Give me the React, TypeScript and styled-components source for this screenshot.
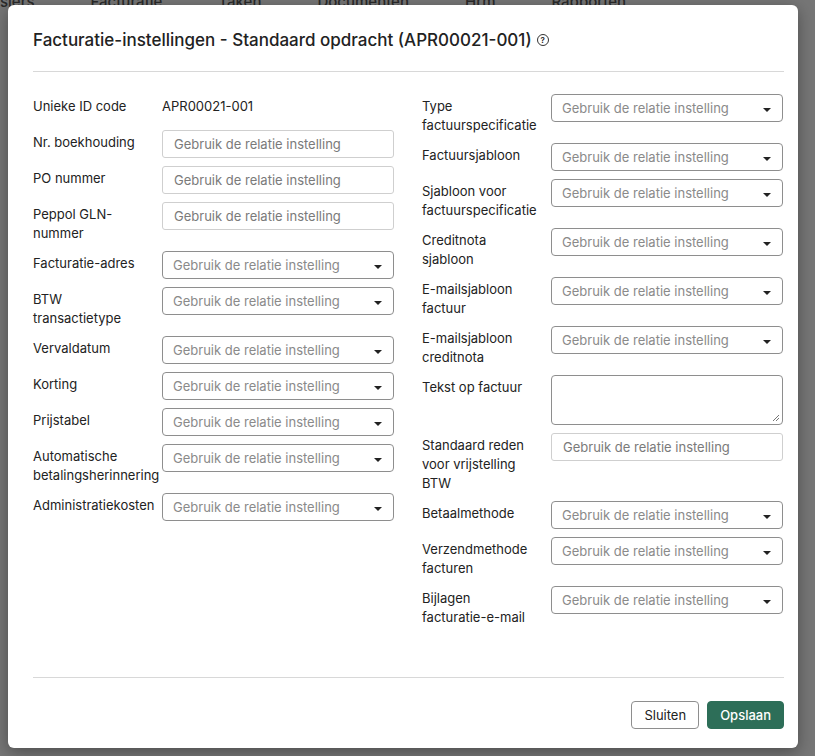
import React from 'react';
import styled, { createGlobalStyle } from 'styled-components';

const Global = createGlobalStyle`
  html, body { margin: 0; padding: 0; }
  body { background: #767676; font-family: Inter, "Noto Sans", sans-serif; color: #222; }
`;

const Page = styled.div`
  position: relative;
  width: 815px;
  height: 756px;
  overflow: hidden;
`;

const BackNav = styled.div`
  display: flex;
  gap: 56px;
  margin-top: -8px;
  font-size: 15px;
  color: #2a2a2a;
  font-weight: 500;
`;

const Modal = styled.div`
  position: absolute;
  left: 8px;
  top: 5px;
  width: 790px;
  height: 743px;
  background: #fff;
  border-radius: 6px;
  box-shadow: 0 4px 16px rgba(0, 0, 0, 0.35);
  box-sizing: border-box;
  padding: 0 14px 0 25px;
  display: flex;
  flex-direction: column;
`;

const Title = styled.h2`
  margin: 0;
  padding: 25px 0 21px;
  font-size: 17px;
  font-weight: 500;
  color: #222;
  display: flex;
  align-items: center;
  gap: 5px;
  border-bottom: 1px solid #d8d8d8;
`;

const Help = styled.span`
  width: 10px;
  height: 10px;
  border: 1.2px solid #333;
  border-radius: 50%;
  font-size: 8px;
  display: inline-flex;
  align-items: center;
  justify-content: center;
  font-weight: 600;
`;

const Grid = styled.div`
  display: grid;
  grid-template-columns: 361px 361px;
  column-gap: 28px;
  padding-top: 22px;
  flex: 1;
`;

const Column = styled.div`
  display: flex;
  flex-direction: column;
  gap: 8px;
`;

const Row = styled.div`
  display: grid;
  grid-template-columns: 129px 232px;
  align-items: start;
  min-height: 28px;
`;

const Label = styled.div`
  font-size: 13px;
  line-height: 19px;
  padding-top: 3px;
  color: #222;
  padding-right: 14px;
`;

const Value = styled.div`
  font-size: 13px;
  line-height: 19px;
  padding-top: 3px;
`;

const TextInput = styled.div`
  height: 28px;
  box-sizing: border-box;
  border: 1px solid #cfcfcf;
  border-radius: 3px;
  padding: 0 11px;
  display: flex;
  align-items: center;
  font-size: 13px;
  color: #7a7a7a;
`;

const Select = styled(TextInput)`
  border-color: #8e8e8e;
  border-radius: 4px;
  justify-content: space-between;
  padding: 0 11px 0 10px;
  color: #8a8a8a;
`;

const Caret = styled.span`
  width: 0;
  height: 0;
  border-left: 4px solid transparent;
  border-right: 4px solid transparent;
  border-top: 4px solid #222;
  margin-top: 3px;
`;

const TextArea = styled.div`
  position: relative;
  height: 50px;
  box-sizing: border-box;
  border: 1px solid #8e8e8e;
  border-radius: 4px;
`;

const Grip = styled.svg`
  position: absolute;
  right: 2px;
  bottom: 2px;
`;

const Footer = styled.div`
  border-top: 1px solid #d8d8d8;
  padding: 23px 0 19px;
  display: flex;
  justify-content: flex-end;
  gap: 8px;
`;

const Button = styled.button<{ primary?: boolean }>`
  height: 28px;
  padding: 0 12px;
  font-family: Inter, sans-serif;
  font-size: 13px;
  border-radius: 4px;
  border: 1px solid ${({ primary }) => (primary ? '#2d6e58' : '#8e8e8e')};
  background: ${({ primary }) => (primary ? '#2d6e58' : '#fff')};
  color: ${({ primary }) => (primary ? '#fff' : '#222')};
  font-weight: ${({ primary }) => (primary ? 500 : 400)};
`;

type Field = { label: string; kind: 'value' | 'input' | 'select' | 'area'; value?: string };

const PH = 'Gebruik de relatie instelling';

const left: Field[] = [
  { label: 'Unieke ID code', kind: 'value', value: 'APR00021-001' },
  { label: 'Nr. boekhouding', kind: 'input' },
  { label: 'PO nummer', kind: 'input' },
  { label: 'Peppol GLN-nummer', kind: 'input' },
  { label: 'Facturatie-adres', kind: 'select' },
  { label: 'BTW transactietype', kind: 'select' },
  { label: 'Vervaldatum', kind: 'select' },
  { label: 'Korting', kind: 'select' },
  { label: 'Prijstabel', kind: 'select' },
  { label: 'Automatische betalingsherinnering', kind: 'select' },
  { label: 'Administratiekosten', kind: 'select' },
];

const right: Field[] = [
  { label: 'Type factuurspecificatie', kind: 'select' },
  { label: 'Factuursjabloon', kind: 'select' },
  { label: 'Sjabloon voor factuurspecificatie', kind: 'select' },
  { label: 'Creditnota sjabloon', kind: 'select' },
  { label: 'E-mailsjabloon factuur', kind: 'select' },
  { label: 'E-mailsjabloon creditnota', kind: 'select' },
  { label: 'Tekst op factuur', kind: 'area' },
  { label: 'Standaard reden voor vrijstelling BTW', kind: 'input' },
  { label: 'Betaalmethode', kind: 'select' },
  { label: 'Verzendmethode facturen', kind: 'select' },
  { label: 'Bijlagen facturatie-e-mail', kind: 'select' },
];

const Control: React.FC<{ f: Field }> = ({ f }) => {
  if (f.kind === 'value') return <Value>{f.value}</Value>;
  if (f.kind === 'input') return <TextInput>{PH}</TextInput>;
  if (f.kind === 'area')
    return (
      <TextArea>
        <Grip width="8" height="8" viewBox="0 0 8 8">
          <path d="M7 1L1 7M7 4L4 7" stroke="#777" strokeWidth="1" />
        </Grip>
      </TextArea>
    );
  return (
    <Select>
      {PH}
      <Caret />
    </Select>
  );
};

const FieldColumn: React.FC<{ fields: Field[] }> = ({ fields }) => (
  <Column>
    {fields.map((f) => (
      <Row key={f.label}>
        <Label>{f.label}</Label>
        <Control f={f} />
      </Row>
    ))}
  </Column>
);

export default function App() {
  return (
    <Page>
      <Global />
      <BackNav>
        <span>siers</span>
        <span>Facturatie</span>
        <span>Taken</span>
        <span>Documenten</span>
        <span>Hrm</span>
        <span>Rapporten</span>
      </BackNav>
      <Modal>
        <Title>
          Facturatie-instellingen - Standaard opdracht (APR00021-001)
          <Help>?</Help>
        </Title>
        <Grid>
          <FieldColumn fields={left} />
          <FieldColumn fields={right} />
        </Grid>
        <Footer>
          <Button>Sluiten</Button>
          <Button primary>Opslaan</Button>
        </Footer>
      </Modal>
    </Page>
  );
}
